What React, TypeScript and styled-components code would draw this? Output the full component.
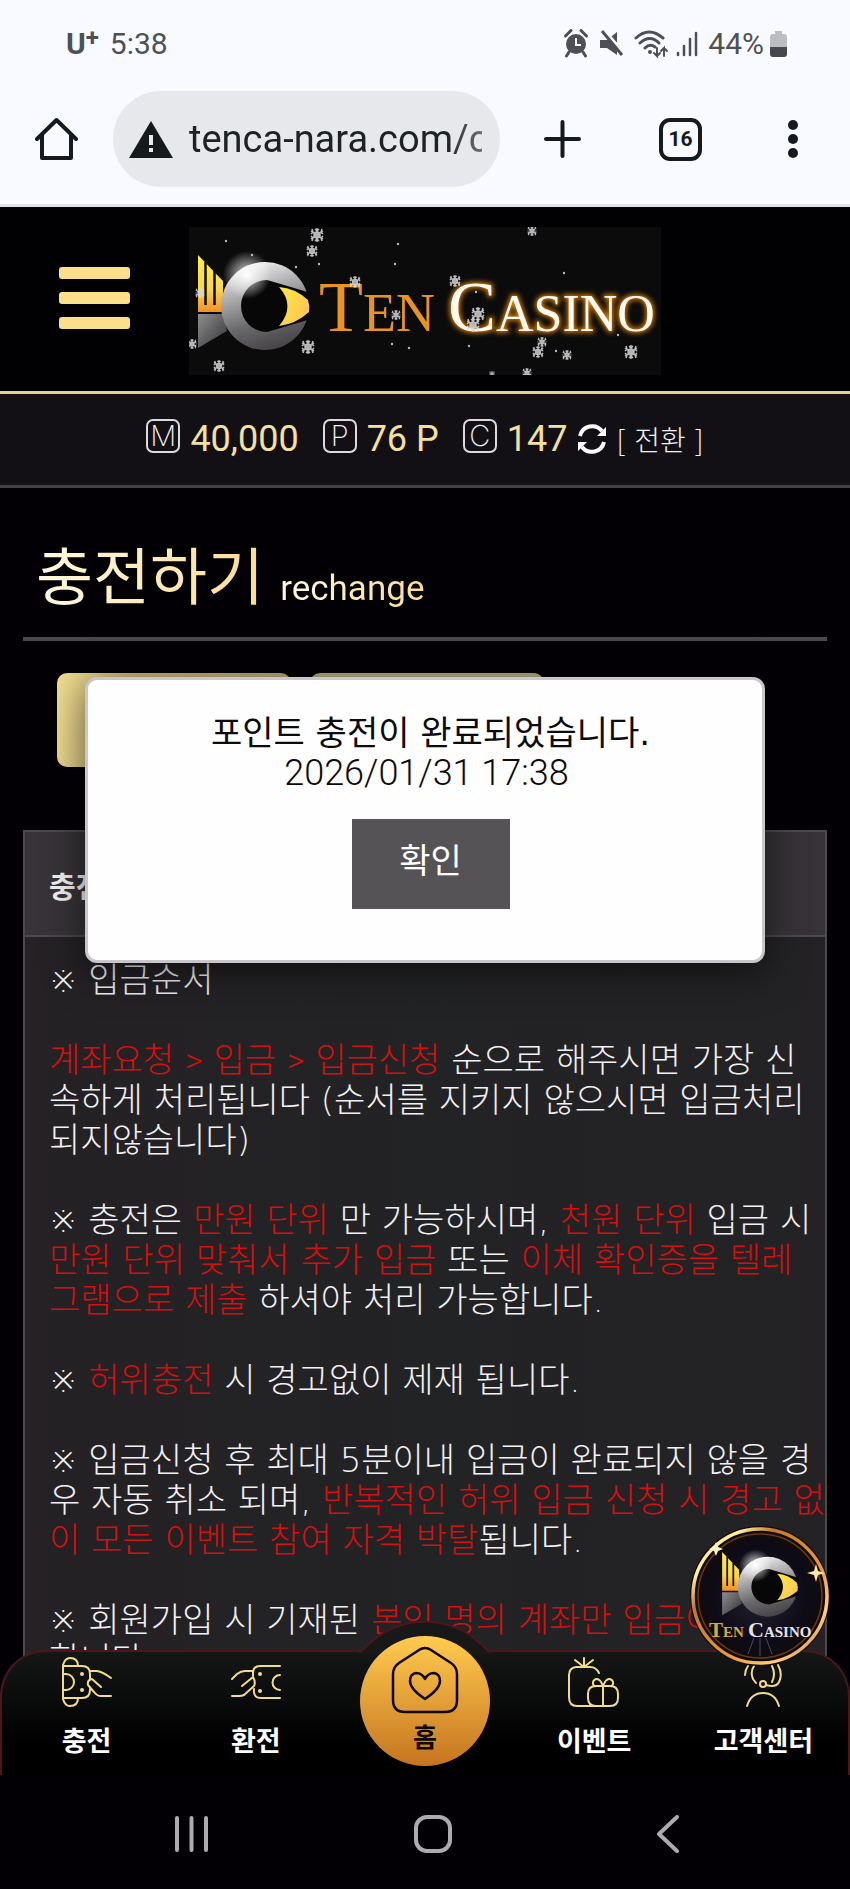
import React from 'react';
import styled, { createGlobalStyle } from 'styled-components';

const latin = 'Roboto, "Noto Sans CJK KR", sans-serif';
const korean = '"Noto Sans CJK KR", sans-serif';
const notice = '"DejaVu Sans Light", "DejaVu Sans", "Noto Sans CJK KR", sans-serif';

const Global = createGlobalStyle`
  *, *::before, *::after { box-sizing: border-box; }
  body { margin: 0; background: #030005; font-family: ${latin}; }
  button { border: 0; padding: 0; background: none; font: inherit; color: inherit; cursor: pointer; }
  a { color: inherit; text-decoration: none; }
  h1, h2, p { margin: 0; font-weight: inherit; }
  svg { display: block; flex: none; }
`;

const Screen = styled.div`
  display: flex;
  flex-direction: column;
  height: 100vh;
  overflow: hidden;
`;

/* phone status bar and browser toolbar */
const Chrome = styled.header`
  flex: none;
  background: #f8faff;
  border-bottom: 3px solid #dfe3e7;
`;
const StatusBar = styled.div`
  display: flex;
  align-items: center;
  justify-content: space-between;
  height: 87px;
  padding: 0 63px 0 66px;
  color: #4f5053;
  font-size: 30px;
  line-height: 36px;
`;
const StatusGroup = styled.div<{ $gap: number }>`
  display: flex;
  align-items: center;
  gap: ${(p) => p.$gap}px;
`;
const Carrier = styled.span`
  display: flex;
  font-weight: 700;
  font-size: 30px;
`;
const CarrierPlus = styled.sup`
  font-size: 24px;
  line-height: 24px;
`;
const Toolbar = styled.div`
  display: flex;
  align-items: center;
  height: 117px;
  padding: 0 52px 13px 35px;
  color: #171a1d;
`;
const AddressPill = styled.label`
  display: flex;
  flex: 1;
  align-items: center;
  gap: 16px;
  min-width: 0;
  height: 96px;
  margin: 0 44px 0 35px;
  padding: 0 18px 0 16px;
  border-radius: 48px;
  background: #e6e8ec;
`;
const Address = styled.input`
  flex: 1;
  min-width: 0;
  padding: 0;
  border: 0;
  outline: 0;
  background: none;
  color: #1f2225;
  font: 400 38px/48px ${latin};
  mask-image: linear-gradient(90deg, #000 88%, #0009);
`;
const TabCount = styled.button`
  width: 43px;
  height: 43px;
  margin: 0 86px 0 78px;
  border: 4px solid #171a1d;
  border-radius: 11px;
  font-size: 21px;
  line-height: 34px;
  font-weight: 700;
`;

/* web page */
const Site = styled.main`
  position: relative;
  flex: 1;
  min-height: 0;
  overflow: hidden;
  background: #030005;
`;
const SiteHeader = styled.div`
  display: grid;
  grid-template-columns: 1fr auto 1fr;
  align-items: center;
  height: 187px;
  padding: 3px 59px 0;
  background: #010103;
  border-bottom: 3px solid #e6cf94;
`;
const MenuButton = styled.button`
  display: flex;
  flex-direction: column;
  gap: 13px;
  width: 71px;
  margin-bottom: 6px;
`;
const MenuBar = styled.span`
  height: 12px;
  border-radius: 3px;
  background: #fbdf8a;
`;
const Balances = styled.div`
  display: flex;
  align-items: center;
  justify-content: center;
  height: 94px;
  padding-bottom: 2px;
  background: #131015;
  border-bottom: 3px solid #434045;
  color: #f6e0a0;
  font-size: 36px;
  line-height: 42px;
`;
const Balance = styled.span`
  display: flex;
  align-items: center;
  gap: 10px;
  margin-right: 24px;
  &:last-of-type { margin-right: 10px; }
`;
const Badge = styled.span`
  display: grid;
  place-items: center;
  width: 34px;
  height: 34px;
  margin-bottom: 6px;
  border: 2px solid #dcdadd;
  border-radius: 7px;
  color: #f0eef1;
  font: 200 29px/30px Inter, ${latin};
`;
const Convert = styled.button`
  display: flex;
  align-items: center;
  gap: 9px;
  color: #f4f2f5;
  font: 300 28px/36px ${korean};
`;
const Bracket = styled.span`
  display: inline-flex;
  gap: 9px;
`;

const Content = styled.section`
  padding: 0 23px;
`;
const PageTitle = styled.h1`
  display: flex;
  align-items: baseline;
  gap: 16px;
  height: 153px;
  padding: 49px 13px 0;
  border-bottom: 4px solid #4b484c;
  font-family: ${latin};
`;
const TitleText = styled.span<{ $size: number }>`
  font-size: ${(p) => p.$size}px;
  line-height: 84px;
  background: linear-gradient(90deg, #fff9e0, #fbdc94);
  background-clip: text;
  -webkit-background-clip: text;
  color: transparent;
`;
const Actions = styled.div`
  display: flex;
  gap: 19px;
  padding: 32px 34px 63px;
`;
const ActionButton = styled.button<{ $muted?: boolean }>`
  width: 234px;
  height: 94px;
  border-radius: 10px;
  background: ${(p) => (p.$muted ? 'linear-gradient(#b3ac80, #c9bd84)' : 'linear-gradient(100deg, #f2df93, #cdb877 30%, #b5a47c)')};
`;
const Panel = styled.article`
  border: 2px solid #4b494d;
  background: linear-gradient(90deg, #252124, #222324 50%, #242224);
  color: #f2f0f3;
`;
const PanelHead = styled.h2`
  height: 105px;
  padding: 0 24px;
  border-bottom: 2px solid #4b494d;
  background: #373338;
  font: 700 29px/106px ${korean};
`;
const Notice = styled.div`
  padding: 23px 0 0 24px;
  font: 300 34px/40px ${notice};
  white-space: nowrap;
`;
const Paragraph = styled.p`
  margin-bottom: 40px;
`;
const Red = styled.span`
  color: #d3100f;
`;
const Sign = styled.span`
  font-family: Roboto, sans-serif;
  font-weight: 300;
`;

const Dialog = styled.div`
  position: absolute;
  top: 470px;
  left: 10%;
  right: 10%;
  height: 286px;
  display: flex;
  flex-direction: column;
  align-items: center;
  padding: 33px 0 0 11px;
  border: 3px solid #c8c6ca;
  border-radius: 12px;
  background: #fefefe;
  box-shadow: 0 8px 40px rgba(0, 0, 0, 0.55);
  color: #0b0a0c;
`;
const DialogTitle = styled.p`
  font: 400 34px/40px "DejaVu Sans", ${korean};
`;
const DialogDate = styled.p`
  margin-right: 8px;
  font: 300 36px/40px ${latin};
`;
const Confirm = styled.button`
  width: 158px;
  height: 90px;
  margin-top: 26px;
  padding-bottom: 10px;
  background: #565357;
  color: #fff;
  font: 400 34px/80px ${korean};
`;

const FloatingLink = styled.a`
  position: absolute;
  right: 20px;
  bottom: 109px;
  z-index: 2;
`;
const TabBar = styled.nav`
  position: absolute;
  left: 0;
  right: 0;
  bottom: 0;
  display: grid;
  grid-template-columns: repeat(5, 1fr);
  height: 125px;
  border: 2px solid #4b171c;
  border-bottom: 0;
  border-radius: 46px 46px 0 0;
  background: linear-gradient(#151716, #000 75%);
`;
const Bump = styled.svg`
  position: absolute;
  left: 50%;
  top: -34px;
  margin-left: -70px;
`;
const Tab = styled.a`
  display: flex;
  flex-direction: column;
  align-items: center;
  color: #fff;
  font: 700 27px/36px ${korean};
`;
const TabIcon = styled.span`
  display: grid;
  place-items: center;
  height: 50px;
  margin: 5px 0 15px;
`;
const HomeTab = styled(Tab)`
  position: relative;
  justify-self: center;
  width: 130px;
  height: 130px;
  margin-top: -16px;
  padding-top: 10px;
  gap: 4px;
  border-radius: 50%;
  background: linear-gradient(#ffcb4f, #c5741f);
  color: #120600;
  font-size: 26px;
`;

const SystemNav = styled.nav`
  flex: none;
  display: flex;
  justify-content: space-between;
  align-items: center;
  height: 114px;
  padding: 4px 170px 0 174px;
  background: #030005;
  color: #adabae;
`;

const line = { fill: 'none', stroke: 'currentColor', strokeLinecap: 'round' as const, strokeLinejoin: 'round' as const };

function Fish() {
  return (
    <g>
      <path d="M9 28 34 54V85H9Z" fill="url(#gold)" />
      <path d="M16.500 35V78M25.500 44V78" stroke="#0b0905" strokeWidth="2.500" />
      <path d="M9 87H34L38 104 9 121Z" fill="url(#tail)" />
      <circle cx="76" cy="79" r="44" fill="url(#ring)" />
      <path d="M78 53 122 66V92L78 105A26 26 0 0 1 78 53Z" fill="#080708" />
      <path d="M90 60Q106 61 119 73 121 79 120 85 107 97 90 99 107 79 90 60Z" fill="url(#beak)" />
      <circle cx="58" cy="48" r="24" fill="url(#flare)" />
    </g>
  );
}

function Paints() {
  return (
    <defs>
      <linearGradient id="gold" x1="0" y1="0" x2="0" y2="1"><stop offset="0" stopColor="#fff04a" /><stop offset="0.600" stopColor="#fbd64d" /><stop offset="1" stopColor="#ef9126" /></linearGradient>
      <linearGradient id="tail" x1="0" y1="0" x2="1" y2="1"><stop offset="0" stopColor="#8f8f90" /><stop offset="0.500" stopColor="#605f61" /><stop offset="1" stopColor="#333" /></linearGradient>
      <linearGradient id="ring" x1="0.200" y1="0" x2="0.500" y2="1"><stop offset="0" stopColor="#fff" /><stop offset="0.300" stopColor="#b9b9bb" /><stop offset="0.700" stopColor="#69686b" /><stop offset="1" stopColor="#49464a" /></linearGradient>
      <linearGradient id="beak" x1="0" y1="0" x2="1" y2="0.600"><stop offset="0" stopColor="#ffe93e" /><stop offset="1" stopColor="#fbc657" /></linearGradient>
      <radialGradient id="flare"><stop offset="0" stopColor="#fff" /><stop offset="0.300" stopColor="#fff" stopOpacity="0.600" /><stop offset="1" stopColor="#fff" stopOpacity="0" /></radialGradient>
    </defs>
  );
}

const flakes = [[128, 8, 7], [123, 24, 6], [343, 4, 5], [11, 66, 5], [166, 55, 6], [207, 88, 5], [266, 54, 6], [289, 87, 7], [284, 98, 7], [119, 120, 7], [30, 139, 6], [3, 117, 5], [353, 115, 5], [349, 125, 6], [378, 128, 5], [442, 125, 7], [338, 146, 5], [303, 147, 3]];
const specks = [[37, 14], [63, 28], [107, 40], [130, 37], [209, 17], [206, 37], [375, 46], [287, 65], [203, 117], [220, 121], [280, 119], [367, 124], [429, 108]];

function Logo() {
  return (
    <svg width="472" height="148" viewBox="0 0 472 148" role="img" aria-label="Ten Casino">
      <Paints />
      <defs>
        <filter id="glow" x="-10%" y="-20%" width="120%" height="140%"><feGaussianBlur stdDeviation="2.500" /></filter>
      </defs>
      <rect width="472" height="148" fill="#0b0b0c" />
      <Fish />
      <g fontFamily="Liberation Serif, serif">
        <text x="130" y="104" fontSize="72" fill="#e8951f">T<tspan fontSize="54">EN</tspan></text>
        <text x="259" y="104" fontSize="72" fill="#d97f08" stroke="#d97f08" strokeWidth="3" filter="url(#glow)" aria-hidden="true">C<tspan fontSize="52">ASINO</tspan></text>
        <text x="259" y="104" fontSize="72" fill="#fffaf0">C<tspan fontSize="52">ASINO</tspan></text>
      </g>
      {flakes.map(([x, y, r]) => (
        <g key={`${x}-${y}`} transform={`translate(${x} ${y}) scale(${r / 7})`} stroke="#dcdcde" strokeWidth="1.500" opacity="0.850">
          <path d="M0-7V7M-6-4 6 4M-6 4 6-4M-2-6 0-4 2-6M-2 6 0 4 2 6M-6-1-4-3-5-6M6 1 4 3 5 6M-6 1-4 3-5 6M6-1 4-3 5-6" fill="none" />
          <circle r="3" fill="#cfcfd2" />
        </g>
      ))}
      {specks.map(([x, y]) => <circle key={`${x}-${y}`} cx={x} cy={y} r="1.200" fill="#b9b9bc" />)}
    </svg>
  );
}

function RoundLogo() {
  return (
    <svg width="140" height="140" viewBox="0 0 140 140" role="img" aria-label="Ten Casino">
      <defs>
        <linearGradient id="rim" x1="0" y1="0" x2="1" y2="1"><stop offset="0" stopColor="#ffd56a" /><stop offset="0.180" stopColor="#fff0a0" /><stop offset="0.300" stopColor="#c07a2c" /><stop offset="0.600" stopColor="#e9953a" /><stop offset="0.800" stopColor="#ffcf7a" /><stop offset="1" stopColor="#b4651f" /></linearGradient>
        <radialGradient id="night"><stop offset="0" stopColor="#25232f" /><stop offset="0.700" stopColor="#0d0b18" /><stop offset="1" stopColor="#130b0a" /></radialGradient>
      </defs>
      <circle cx="70" cy="70" r="70" fill="#120b09" />
      <circle cx="70" cy="70" r="67" fill="url(#night)" stroke="url(#rim)" strokeWidth="3.500" />
      <circle cx="70" cy="70" r="62" fill="none" stroke="#6b3a17" strokeWidth="1.500" />
      <g transform="translate(26 7) scale(.68)"><Fish /></g>
      <path d="M126 38 128 45 135 47 128 49 126 56 124 49 117 47 124 45Z" fill="#ffe9a0" />
      <path d="M26 16 28 21 33 23 28 25 26 30 24 25 19 23 24 21Z" fill="#fff3c4" />
      <path d="M70 112V130M64 112 58 128M76 112 82 128" stroke="#4c4b5c" strokeWidth="1" />
      <g fontFamily="Liberation Serif, serif" fontWeight="700">
        <text x="19" y="111" fontSize="21" fill="#d7ae35">T<tspan fontSize="15">EN</tspan></text>
        <text x="58" y="111" fontSize="22" fill="#e4e3e8">C<tspan fontSize="15">ASINO</tspan></text>
      </g>
    </svg>
  );
}

const StatusIcons = () => (
  <svg width="136" height="30" viewBox="0 0 136 30" fill="#4f5053" aria-hidden="true">
    <circle cx="12" cy="15" r="10" />
    <path d="M1.500 7 7 1.500M22.500 7 17 1.500M5 23 2.500 27M19 23 21.500 27" stroke="#4f5053" strokeWidth="3" strokeLinecap="round" />
    <path d="M12 9V16H17" fill="none" stroke="#f8faff" strokeWidth="2" />
    <path d="M36 11H43L53 3V26L43 19H36Z" />
    <path d="M40 1 60 24" stroke="#f8faff" strokeWidth="3" />
    <path d="M38 2 58 26" stroke="#4f5053" strokeWidth="3" />
    <g fill="none" stroke="#4f5053" strokeWidth="3" strokeLinecap="round">
      <path d="M72 9Q85-3 99 9M76 14Q86 5 95 14M81 19Q86 14 91 18" />
      <path d="M93 19V27L90 24M93 27 96 24M100 27V19L97 22M100 19 103 22" strokeWidth="2" />
      <path d="M114 24V26M120 17V26M126 10V26M132 4V26" strokeWidth="2.500" />
    </g>
    <circle cx="86" cy="23" r="2" />
  </svg>
);

const tabs = {
  charge: (
    <svg width="50" height="50" viewBox="0 0 50 50" color="#f0dc8c" strokeWidth="2" {...line}>
      <path d="M1 42V8Q3 1 8 1 16 1 16 9M1 42Q3 49 8 49 16 49 16 41M1 9H20Q28 9 28 17V22M28 32V33Q28 41 20 41H1M1 17H4A8 8 0 0 1 4 33H1M28 14H35Q41 15 49 21M49 39H39Q35 39 32 35L26 28Q25 23 30 22L39 30" />
      <circle cx="20" cy="17" r="1" /><circle cx="20" cy="33" r="1" />
    </svg>
  ),
  withdraw: (
    <svg width="50" height="34" viewBox="0 0 50 34" color="#f0dc8c" strokeWidth="2" {...line}>
      <path d="M49 1H29Q22 1 22 8V12L11 21M22 12Q25 17 23 21L13 30Q11 31 8 31H1M23 24Q22 33 30 33H49M1 14 6 9Q10 6 14 6H22M49 10A7.500 7.500 0 0 0 49 25" />
      <circle cx="29" cy="9" r="1" /><circle cx="29" cy="26" r="1" />
    </svg>
  ),
  event: (
    <svg width="52" height="50" viewBox="0 0 52 50" color="#f0dc8c" strokeWidth="2" {...line}>
      <path d="M31 16Q28 10 22 10H8Q1 11 1 18V40Q1 49 9 49H42Q50 49 50 41V37Q50 29 42 29H28Q20 29 20 37V41Q20 49 28 49M35 29V49M16 10V1M16 10 7 3M16 10 25 3M35 29Q32 21 28 22 23 24 26 29M35 29Q38 21 42 22 47 24 44 29" />
    </svg>
  ),
  support: (
    <svg width="38" height="50" viewBox="0 0 38 50" color="#f0dc8c" strokeWidth="2" {...line}>
      <path d="M4 9Q1 13 1 18M10 9Q6 15 9 22L12 26M28 9Q32 17 28 25M34 8Q39 17 35 25 32 31 22 28M3 49Q7 36 19 36 31 36 35 49" />
      <circle cx="19" cy="27" r="3" />
    </svg>
  ),
};

export default function App() {
  return (
    <Screen>
      <Global />
      <Chrome>
        <StatusBar>
          <StatusGroup $gap={11}>
            <Carrier>U<CarrierPlus>+</CarrierPlus></Carrier>
            <span>5:38</span>
          </StatusGroup>
          <StatusGroup $gap={8}>
            <StatusIcons />
            <StatusGroup $gap={6}>
              <span>44%</span>
              <svg width="17" height="26" viewBox="0 0 17 26" aria-hidden="true">
                <path d="M5 0H12V3H14Q17 3 17 6V16H0V6Q0 3 3 3H5Z" fill="#bcbdc1" />
                <path d="M0 16H17V23Q17 26 14 26H3Q0 26 0 23Z" fill="#47484b" />
              </svg>
            </StatusGroup>
          </StatusGroup>
        </StatusBar>
        <Toolbar>
          <button aria-label="홈페이지">
            <svg width="43" height="44" viewBox="0 0 43 44" strokeWidth="4" {...line}><path d="M2 22 21.500 3 41 22M7 18V41H36V18" /></svg>
          </button>
          <AddressPill>
            <svg width="44" height="37" viewBox="0 0 44 37" aria-hidden="true">
              <path d="M22 0 44 37H0Z" fill="#171a1d" />
              <path d="M22 14V24M22 27V31" stroke="#e6e8ec" strokeWidth="4" />
            </svg>
            <Address aria-label="주소" readOnly value="tenca-nara.com/c" />
          </AddressPill>
          <button aria-label="새 탭">
            <svg width="37" height="38" viewBox="0 0 37 38" strokeWidth="4" {...line}><path d="M2 19H35M18.500 2V36" /></svg>
          </button>
          <TabCount>16</TabCount>
          <button aria-label="메뉴">
            <svg width="10" height="40" viewBox="0 0 10 40" fill="currentColor"><circle cx="5" cy="6" r="5" /><circle cx="5" cy="20" r="5" /><circle cx="5" cy="34" r="5" /></svg>
          </button>
        </Toolbar>
      </Chrome>

      <Site>
        <SiteHeader>
          <MenuButton aria-label="전체 메뉴"><MenuBar /><MenuBar /><MenuBar /></MenuButton>
          <Logo />
        </SiteHeader>
        <Balances>
          <Balance><Badge>M</Badge>40,000</Balance>
          <Balance><Badge>P</Badge>76 P</Balance>
          <Balance><Badge>C</Badge>147</Balance>
          <Convert>
            <svg width="30" height="30" viewBox="0 0 30 30" aria-hidden="true">
              <path d="M3 12A12.500 12.500 0 0 1 25 7M27 18A12.500 12.500 0 0 1 5 23" fill="none" stroke="#fff" strokeWidth="4" />
              <path d="M29 3V12H20ZM1 27V18H10Z" fill="#fff" />
            </svg>
            <Bracket><span>[</span><span>전환</span><span>]</span></Bracket>
          </Convert>
        </Balances>

        <Content>
          <PageTitle>
            <TitleText $size={62}>충전하기</TitleText>
            <TitleText $size={35}>rechange</TitleText>
          </PageTitle>
          <Actions>
            <ActionButton aria-label="계좌요청" />
            <ActionButton aria-label="입금신청" $muted />
          </Actions>
          <Panel>
            <PanelHead>충전</PanelHead>
            <Notice>
              <Paragraph>※ 입금순서</Paragraph>
              <Paragraph>
                <Red>계좌요청 <Sign>&gt;</Sign> 입금 <Sign>&gt;</Sign> 입금신청</Red> 순으로 해주시면 가장 신<br />
                속하게 처리됩니다 (순서를 지키지 않으시면 입금처리<br />
                되지않습니다)
              </Paragraph>
              <Paragraph>
                ※ 충전은 <Red>만원 단위</Red> 만 가능하시며, <Red>천원 단위</Red> 입금 시<br />
                <Red>만원 단위 맞춰서 추가 입금</Red> 또는 <Red>이체 확인증을 텔레<br />
                그램으로 제출</Red> 하셔야 처리 가능합니다.
              </Paragraph>
              <Paragraph>※ <Red>허위충전</Red> 시 경고없이 제재 됩니다.</Paragraph>
              <Paragraph>
                ※ 입금신청 후 최대 5분이내 입금이 완료되지 않을 경<br />
                우 자동 취소 되며, <Red>반복적인 허위 입금 신청 시 경고 없<br />
                이 모든 이벤트 참여 자격 박탈</Red>됩니다.
              </Paragraph>
              <Paragraph>
                ※ 회원가입 시 기재된 <Red>본인 명의 계좌만 입금이</Red><br />
                합니다.
              </Paragraph>
            </Notice>
          </Panel>
        </Content>

        <Dialog role="dialog" aria-label="포인트 충전">
          <DialogTitle>포인트 충전이 완료되었습니다.</DialogTitle>
          <DialogDate>2026/01/31 17:38</DialogDate>
          <Confirm>확인</Confirm>
        </Dialog>

        <FloatingLink href="#casino"><RoundLogo /></FloatingLink>
        <TabBar>
          <Bump width="140" height="36" viewBox="0 0 140 36" aria-hidden="true">
            <path d="M3 36 8 32A82 82 0 0 1 132 32L137 36Z" fill="#171817" />
            <path d="M4 34Q6 34 8 32A82 82 0 0 1 132 32Q134 34 136 34" fill="none" stroke="#4b171c" strokeWidth="2" />
          </Bump>
          <Tab href="#charge"><TabIcon>{tabs.charge}</TabIcon>충전</Tab>
          <Tab href="#withdraw"><TabIcon>{tabs.withdraw}</TabIcon>환전</Tab>
          <HomeTab href="#home">
            <svg width="68" height="68" viewBox="0 0 68 68" strokeWidth="2.500" {...line}>
              <path d="M28 4Q34 0 40 4L60 17Q66 21 66 28V54Q66 66 54 66H14Q2 66 2 54V28Q2 21 8 17ZM34 53Q19 43 19 35 19 28 25 27 31 27 34 33 37 27 43 27 49 28 49 35 49 43 34 53Z" />
            </svg>
            홈
          </HomeTab>
          <Tab href="#event"><TabIcon>{tabs.event}</TabIcon>이벤트</Tab>
          <Tab href="#support"><TabIcon>{tabs.support}</TabIcon>고객센터</Tab>
        </TabBar>
      </Site>

      <SystemNav>
        <button aria-label="최근 앱"><svg width="35" height="38" viewBox="0 0 35 38" strokeWidth="4" {...line}><path d="M3 3V35M17.500 3V35M32 3V35" /></svg></button>
        <button aria-label="홈"><svg width="38" height="38" viewBox="0 0 38 38" strokeWidth="4" {...line}><rect x="2" y="2" width="34" height="34" rx="11" /></svg></button>
        <button aria-label="뒤로"><svg width="24" height="38" viewBox="0 0 24 38" strokeWidth="4" {...line}><path d="M21 2 3 19 21 36" /></svg></button>
      </SystemNav>
    </Screen>
  );
}
